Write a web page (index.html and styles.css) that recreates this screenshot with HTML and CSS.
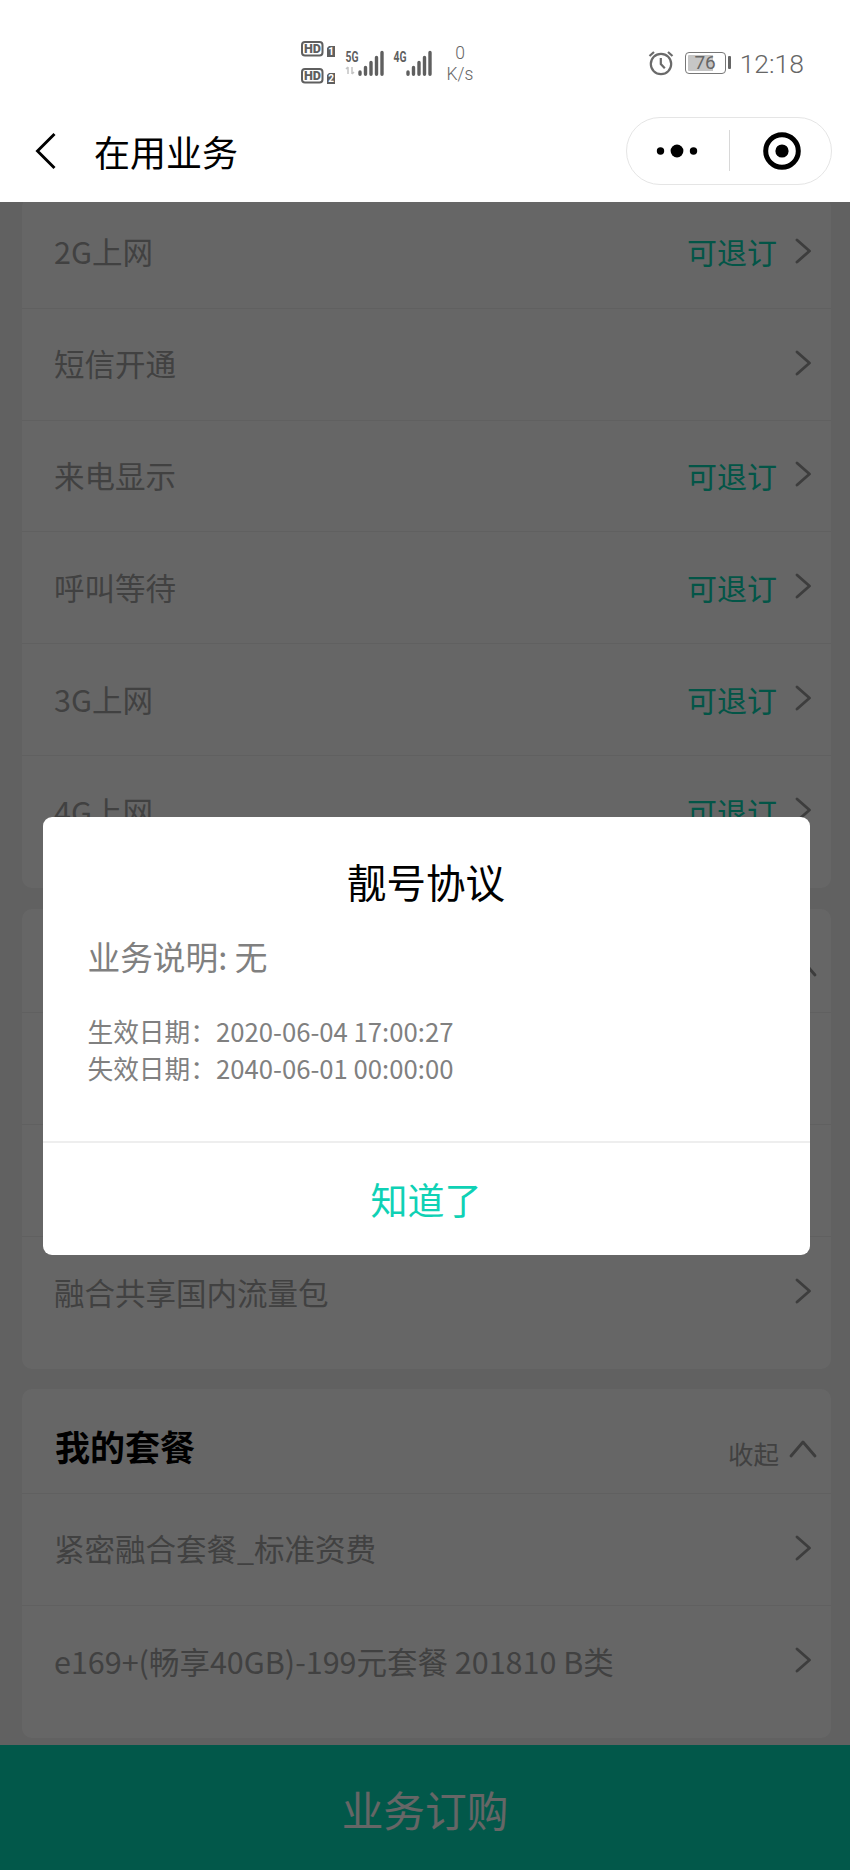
FILE: index.html
```html
<!DOCTYPE html>
<html lang="zh-CN">
<head>
  <meta charset="UTF-8" />
  <title>在用业务</title>
  <link rel="stylesheet" href="styles.css">
</head>
<body>
  <svg class="defs" width="0" height="0">
    <symbol id="right" viewBox="0 0 18 28">
      <path d="M3 3L15.5 14L3 25" fill="none" stroke="currentColor" stroke-width="2.9" stroke-linecap="round" stroke-linejoin="round"/>
    </symbol>
    <symbol id="up" viewBox="0 0 30 20">
      <path d="M3 17L15 3L27 17" fill="none" stroke="currentColor" stroke-width="2.9" stroke-linecap="round" stroke-linejoin="round"/>
    </symbol>
  </svg>

  <header class="top">
    <div class="status">
      <svg class="hd" width="36" height="46" viewBox="0 0 36 46">
        <g fill="none" stroke="#5f5f5f" stroke-width="2">
          <rect x="2" y="3" width="20.5" height="13.5" rx="3"/>
          <rect x="2" y="30" width="20.5" height="13.5" rx="3"/>
        </g>
        <g fill="#5f5f5f">
          <path d="M29 7h6v11h-8V9z"/>
          <path d="M29 34h6v11h-8v-9z"/>
        </g>
        <g class="hd-text">
          <text x="4" y="14.4" textLength="17" lengthAdjust="spacingAndGlyphs">HD</text>
          <text x="4" y="41.4" textLength="17" lengthAdjust="spacingAndGlyphs">HD</text>
        </g>
        <g class="hd-num">
          <text x="28.3" y="16.2">1</text>
          <text x="28.3" y="43.2">2</text>
        </g>
      </svg>
      <svg class="signal" width="40" height="34" viewBox="0 0 40 34">
        <text class="net" x="0.5" y="17.5" textLength="13" lengthAdjust="spacingAndGlyphs">5G</text>
        <path d="M3 23v7M1 25l2-2M7 23v7M7 30l2-2" stroke="#c4c4c4" stroke-width="1.5" fill="none"/>
        <path d="M15 28v2.2M20.5 23.5v6.7M26 18.5v11.7M31.5 13.5v16.7M37 8.5v21.7" stroke="#5f5f5f" stroke-width="3.4" stroke-linecap="round"/>
      </svg>
      <svg class="signal" width="40" height="34" viewBox="0 0 40 34">
        <text class="net" x="0.5" y="17.5" textLength="13" lengthAdjust="spacingAndGlyphs">4G</text>
        <path d="M15 28v2.2M20.5 23.5v6.7M26 18.5v11.7M31.5 13.5v16.7M37 8.5v21.7" stroke="#5f5f5f" stroke-width="3.4" stroke-linecap="round"/>
      </svg>
      <div class="speed"><span>0</span><span>K/s</span></div>
      <div class="status-right">
        <svg width="26" height="26" viewBox="0 0 26 26" fill="none" stroke="#6a6a6a" stroke-width="2.2">
          <circle cx="13" cy="14" r="10.2"/>
          <path d="M12.8 8v6l4 4.2M1.5 6L6 2M24.5 6L20 2"/>
        </svg>
        <div class="battery"><span class="battery-num">76</span></div>
        <span class="time">12:18</span>
      </div>
    </div>
    <div class="nav">
      <svg class="back" width="22" height="38" viewBox="0 0 22 38">
        <path d="M19.5 2L2.5 19L19.5 36" fill="none" stroke="#000" stroke-width="2.9"/>
      </svg>
      <h1>在用业务</h1>
      <div class="capsule">
        <svg width="42" height="14" viewBox="0 0 42 14">
          <circle cx="4.5" cy="7" r="3.7"/>
          <circle cx="21" cy="7" r="6.4"/>
          <circle cx="37.5" cy="7" r="3.7"/>
        </svg>
        <i class="capsule-line"></i>
        <svg width="40" height="40" viewBox="0 0 40 40">
          <circle cx="20" cy="20" r="16.3" fill="none" stroke="#000" stroke-width="5"/>
          <circle cx="20" cy="20" r="6.6"/>
        </svg>
      </div>
    </div>
  </header>

  <main class="list">
    <section class="card card-first">
      <div class="row"><span>2G上网</span><em>可退订</em><svg class="arrow"><use href="#right"/></svg></div>
      <div class="row"><span>短信开通</span><svg class="arrow"><use href="#right"/></svg></div>
      <div class="row"><span>来电显示</span><em>可退订</em><svg class="arrow"><use href="#right"/></svg></div>
      <div class="row"><span>呼叫等待</span><em>可退订</em><svg class="arrow"><use href="#right"/></svg></div>
      <div class="row"><span>3G上网</span><em>可退订</em><svg class="arrow"><use href="#right"/></svg></div>
      <div class="row"><span>4G上网</span><em>可退订</em><svg class="arrow"><use href="#right"/></svg></div>
    </section>

    <section class="card">
      <div class="card-head"><svg class="fold"><use href="#up"/></svg></div>
      <div class="row"></div>
      <div class="row"></div>
      <div class="row"><span>融合共享国内流量包</span><svg class="arrow"><use href="#right"/></svg></div>
    </section>

    <section class="card">
      <div class="card-head">
        <h2>我的套餐</h2>
        <small>收起</small>
        <svg class="fold"><use href="#up"/></svg>
      </div>
      <div class="row"><span>紧密融合套餐_标准资费</span><svg class="arrow"><use href="#right"/></svg></div>
      <div class="row"><span>e169+(畅享40GB)-199元套餐 201810 B类</span><svg class="arrow"><use href="#right"/></svg></div>
    </section>
  </main>

  <div class="order">业务订购</div>

  <div class="mask">
    <div class="modal">
      <div class="modal-body">
        <h3>靓号协议</h3>
        <p class="desc">业务说明: 无</p>
        <p class="date">生效日期：2020-06-04 17:00:27</p>
        <p class="date">失效日期：2040-06-01 00:00:00</p>
      </div>
      <div class="modal-btn">知道了</div>
    </div>
  </div>
</body>
</html>
```
FILE: styles.css
```css
* {
    box-sizing: border-box;
    margin: 0;
    padding: 0;
}

body {
    height: 1870px;
    overflow: hidden;
    display: flex;
    flex-direction: column;
    background-color: #f2f2f2;
    font-family: "Noto Sans CJK SC", sans-serif;
    font-weight: 400;
}

.defs {
    position: absolute;
}

/* status bar */
.top {
    flex: none;
    height: 202px;
    background-color: #fff;
}

.status {
    height: 100px;
    display: flex;
    align-items: flex-start;
    padding: 39px 46px 0 300px;
    font-family: Roboto, sans-serif;
    color: #666;
}

.hd-text {
    font: 900 13px Roboto, sans-serif;
    fill: #5f5f5f;
}

.hd-num {
    font: bold 10px Roboto, sans-serif;
    fill: #fff;
}

.net {
    font: bold 15px Roboto, sans-serif;
    fill: #5f5f5f;
}

.signal {
    margin: 5px 0 0 8px;
}

.hd + .signal {
    margin-left: 9px;
}

.speed {
    width: 30px;
    margin: 4px 0 0 12px;
    display: flex;
    flex-direction: column;
    align-items: center;
    font-size: 17.5px;
    line-height: 21px;
    font-weight: 300;
}

.status-right {
    margin: 9px 0 0 auto;
    display: flex;
    align-items: center;
    height: 30px;
}

.battery {
    width: 41px;
    height: 22px;
    margin: 0 14px 0 11px;
    border: 1.5px solid #777;
    border-radius: 4px;
    position: relative;
    padding: 2px;
    background: linear-gradient(to right, #c6c6c6 72%, #fff 72%) content-box;
    text-align: center;
}

.battery::after {
    content: "";
    position: absolute;
    right: -6px;
    top: 3px;
    width: 3px;
    height: 13px;
    background-color: #666;
    border-radius: 1px;
}

.battery-num {
    display: block;
    font-size: 19px;
    line-height: 16px;
    font-weight: 400;
}

.time {
    font-size: 26.5px;
    font-weight: 300;
}

/* title */
.nav {
    height: 101px;
    display: flex;
    align-items: center;
    padding: 0 18px 0 35px;
}

.nav h1 {
    margin-left: 37px;
    font-size: 36px;
    font-weight: 400;
}

.capsule {
    width: 206px;
    height: 68px;
    margin-left: auto;
    display: flex;
    align-items: center;
    justify-content: space-between;
    padding: 0 29px;
    border: 1.5px solid #e5e5e5;
    border-radius: 34px;
}

.capsule-line {
    width: 1px;
    height: 41px;
    margin-left: 11px;
    margin-right: 12px;
    background-color: #d8d8d8;
}

/* list */
.list {
    flex: 1;
    min-height: 0;
    overflow: hidden;
    padding: 0 19px 0 22px;
}

.card {
    margin-bottom: 20.8px;
    padding-bottom: 20px;
    background-color: #fff;
    border-radius: 10px;
}

.card-first {
    margin-top: -5px;
}

.row {
    height: 111.8px;
    display: flex;
    align-items: center;
    padding: 0 19px 2px 32px;
    border-bottom: 1.5px solid #f0f0f0;
    font-size: 30.5px;
    color: #a3a3a3;
}

.row:last-child {
    border-bottom: none;
}

.row em {
    margin-left: auto;
    font-style: normal;
    font-size: 30px;
    color: #08d5b2;
}

.arrow {
    flex: none;
    width: 18px;
    height: 28px;
    margin: 0 0 1px auto;
    color: #999;
}

.row em + .arrow {
    margin-left: 17px;
}

.card-head {
    height: 104.6px;
    display: flex;
    align-items: center;
    justify-content: flex-end;
    padding: 9px 13px 0 33px;
    border-bottom: 1.5px solid #f0f0f0;
    color: #a3a3a3;
}

.card-head h2 {
    margin-right: auto;
    font-size: 35px;
    font-weight: 700;
    color: #000;
}

.card-head small {
    margin: 14px 9px 0 0;
    font-size: 25.5px;
}

.fold {
    width: 30px;
    height: 20px;
    margin-top: 6px;
    color: #999;
}

.order {
    flex: none;
    height: 125.5px;
    line-height: 128px;
    background-color: #05dcb9;
    color: #fff;
    font-size: 41.7px;
    text-align: center;
}

/* dialog */
.mask {
    position: fixed;
    top: 202px;
    left: 0;
    right: 0;
    bottom: 0;
    display: flex;
    align-items: center;
    justify-content: center;
    padding-left: 2px;
    background-color: rgba(0, 0, 0, 0.6);
}

.modal {
    width: 767px;
    height: 438px;
    display: flex;
    flex-direction: column;
    background-color: #fff;
    border-radius: 9px;
}

.modal-body {
    flex: 1;
    padding: 35px 45px 0;
    color: #808080;
}

.modal-body h3 {
    font-size: 39.5px;
    line-height: 58px;
    font-weight: 400;
    color: #000;
    text-align: center;
}

.desc {
    margin: 22px 0 32px;
    font-size: 32.7px;
    line-height: 48px;
}

.date {
    font-size: 25.7px;
    line-height: 37px;
}

.modal-btn {
    height: 114px;
    line-height: 112px;
    border-top: 2px solid #eee;
    color: #0fd1b5;
    font-size: 37px;
    text-align: center;
}
```
